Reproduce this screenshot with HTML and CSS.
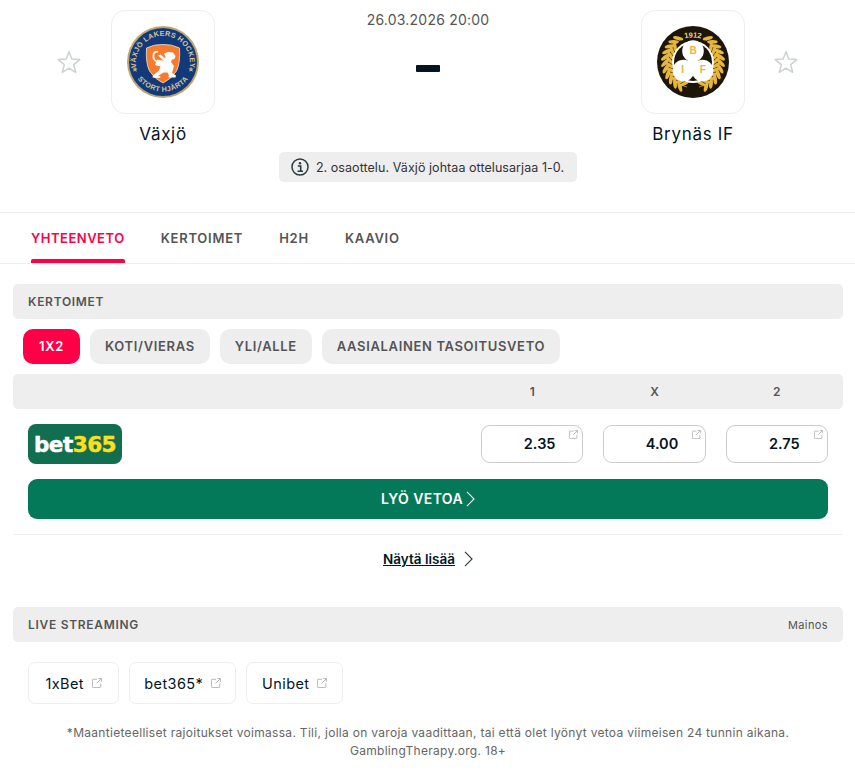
FILE: index.html
```html
<!DOCTYPE html>
<html lang="fi">
<head>
<meta charset="utf-8">
<title>Växjö - Brynäs IF</title>
<link rel="stylesheet" href="styles.css">
</head>
<body>
<svg class="defs" width="0" height="0" aria-hidden="true">
  <defs>
    <symbol id="ext" viewBox="0 0 12 12"><path d="M6 1.500H1.500a1 1 0 0 0-1 1v8a1 1 0 0 0 1 1h8a1 1 0 0 0 1-1V6.500M7.500.7h3.800v3.800M11.200.8 5.500 6.500" fill="none" stroke="currentColor" stroke-width="1"/></symbol>
    <symbol id="star" viewBox="0 0 24 24"><path d="M12 1.800l2.900 7.300 7.900.5-6.100 5 2 7.700L12 18.100l-6.700 4.200 2-7.700-6.100-5 7.900-.5z" fill="none" stroke="currentColor" stroke-width="1.500" stroke-linejoin="round"/></symbol>
    <symbol id="chev" viewBox="0 0 10 18"><path d="M1 1l8 8-8 8" fill="none" stroke="currentColor" stroke-width="1.200"/></symbol>
  </defs>
</svg>
<header class="match">
  <div class="match-row">
    <svg class="star"><use href="#star"/></svg>
    <div class="team">
      <div class="crest">
        <svg class="crest-img" viewBox="0 0 72 72">
          <defs>
            <path id="vtop" d="M9.500 42A27 27 0 1 1 62.500 42"/>
            <path id="vbot" d="M5.500 42A31.500 31.500 0 0 0 66.500 42"/>
          </defs>
          <circle cx="36" cy="36" r="36" fill="#bfa56e"/>
          <circle cx="36" cy="36" r="34" fill="#12397a"/>
          <text class="v-text"><textPath href="#vtop" startOffset="50%" text-anchor="middle">VÄXJÖ LAKERS HOCKEY</textPath></text>
          <text class="v-text"><textPath href="#vbot" startOffset="50%" text-anchor="middle">STORT HJÄRTA</textPath></text>
          <path d="M8 40.500l.8 1.900 2 .1-1.600 1.300.6 2-1.800-1.100-1.700 1.100.5-2-1.500-1.300 2-.1zM64 40.500l.8 1.900 2 .1-1.600 1.300.6 2-1.800-1.100-1.700 1.100.5-2-1.500-1.300 2-.1z" fill="#c9b27a"/>
          <path d="M19.500 22q8-4 16.500-3.500 8.500-.5 16.500 3.500 1 15-3 23-5 8-13.500 12-8.500-4-13.500-12-4-8-3-23z" fill="#f57c2f" stroke="#f2e3d0" stroke-width=".8"/>
          <path d="M34 38Q25 35 26.500 28.500 27.500 25 31 26" fill="none" stroke="#fff" stroke-width="1.600"/>
          <path d="M30 33.500 38 35 38.500 31 37 27.500 41 26 46 26.500 48.500 30 47.500 33 45 33.500 44 36 47 40 45 47 49 49.500 48.500 51.500 41.500 51.500 42 49.500 40.500 46.500 36.500 46.500 31 50 33.500 50.500 33 52 25.500 51.500 26 49.500 32 44.500 33.500 40.500 28 39z" fill="#fff"/>
          <path d="M38 36 31 29.500 33.500 28.500 39 33z" fill="#fff"/>
        </svg>
      </div>
      <div class="team-name">Växjö</div>
    </div>
    <div class="center">
      <div class="date">26.03.2026 20:00</div>
      <div class="score" aria-label="-"></div>
    </div>
    <div class="team">
      <div class="crest">
        <svg class="crest-img" viewBox="0 0 72 72">
          <defs>
            <ellipse id="lo" cx="36" cy="8" rx="1.900" ry="5.200" transform="rotate(45 36 8)"/>
            <ellipse id="li" cx="36" cy="12.500" rx="1.700" ry="4.600" transform="rotate(-42 36 12.500)"/>
            <g id="laurel">
              <path d="M49 14A25.500 25.500 0 0 1 42 61" fill="none" stroke="#e6b63d" stroke-width=".7"/>
              <use href="#lo" transform="rotate(32 36 36)"/><use href="#lo" transform="rotate(44 36 36)"/><use href="#lo" transform="rotate(56 36 36)"/><use href="#lo" transform="rotate(68 36 36)"/><use href="#lo" transform="rotate(80 36 36)"/><use href="#lo" transform="rotate(92 36 36)"/><use href="#lo" transform="rotate(104 36 36)"/><use href="#lo" transform="rotate(116 36 36)"/><use href="#lo" transform="rotate(128 36 36)"/><use href="#lo" transform="rotate(140 36 36)"/><use href="#lo" transform="rotate(152 36 36)"/>
              <use href="#li" transform="rotate(50 36 36)"/><use href="#li" transform="rotate(62 36 36)"/><use href="#li" transform="rotate(74 36 36)"/><use href="#li" transform="rotate(86 36 36)"/><use href="#li" transform="rotate(98 36 36)"/><use href="#li" transform="rotate(110 36 36)"/><use href="#li" transform="rotate(122 36 36)"/><use href="#li" transform="rotate(134 36 36)"/><use href="#li" transform="rotate(146 36 36)"/><use href="#li" transform="rotate(158 36 36)"/>
            </g>
            <path id="b19" d="M24 13.500Q36 9.500 48 13.500"/>
          </defs>
          <circle cx="36" cy="36" r="36" fill="#1d1608"/>
          <g fill="#e6b63d">
            <use href="#laurel"/>
            <use href="#laurel" transform="matrix(-1 0 0 1 72 0)"/>
          </g>
          <circle cx="36" cy="36" r="21" fill="#fff"/>
          <circle cx="36" cy="36" r="19" fill="#1d1608"/>
          <circle cx="36" cy="25" r="10.800" fill="#fff"/>
          <circle cx="26.500" cy="44.500" r="10.800" fill="#fff"/>
          <circle cx="45.500" cy="44.500" r="10.800" fill="#fff"/>
          <circle cx="36" cy="38" r="6" fill="#fff"/>
          <text class="b-year"><textPath href="#b19" startOffset="50%" text-anchor="middle">1912</textPath></text>
          <text class="b-letter" x="36" y="28">B</text>
          <text class="b-letter" x="25.700" y="46.500">I</text>
          <text class="b-letter" x="45.700" y="46.500">F</text>
        </svg>
      </div>
      <div class="team-name">Brynäs IF</div>
    </div>
    <svg class="star star-right"><use href="#star"/></svg>
  </div>
  <div class="notice">
    <svg class="info" viewBox="0 0 18 18"><circle cx="9" cy="9" r="8" fill="none" stroke="currentColor" stroke-width="1.500"/><circle cx="9" cy="5.200" r="1.200" fill="currentColor"/><path d="M6.800 8h2.900v5M6.500 13.300h5.500" fill="none" stroke="currentColor" stroke-width="1.600"/></svg>
    <span>2. osaottelu. Växjö johtaa ottelusarjaa 1-0.</span>
  </div>
</header>

<nav class="tabs">
  <a class="tab tab-active">YHTEENVETO</a>
  <a class="tab">KERTOIMET</a>
  <a class="tab">H2H</a>
  <a class="tab">KAAVIO</a>
</nav>

<main class="content">
  <section class="odds">
    <div class="bar"><span class="bar-title">KERTOIMET</span></div>
    <div class="pills">
      <a class="pill pill-active">1X2</a>
      <a class="pill">KOTI/VIERAS</a>
      <a class="pill">YLI/ALLE</a>
      <a class="pill">AASIALAINEN TASOITUSVETO</a>
    </div>
    <div class="bar odds-head">
      <div class="odds-cols">
        <span class="odds-label">1</span>
        <span class="odds-label">X</span>
        <span class="odds-label">2</span>
      </div>
    </div>
    <div class="odds-row">
      <div class="bet365"><span class="b-white">bet</span><span class="b-yellow">365</span></div>
      <div class="odds-cols">
        <a class="odd">2.35<svg class="odd-ext"><use href="#ext"/></svg></a>
        <a class="odd">4.00<svg class="odd-ext"><use href="#ext"/></svg></a>
        <a class="odd">2.75<svg class="odd-ext"><use href="#ext"/></svg></a>
      </div>
    </div>
    <a class="bet-btn">LYÖ VETOA<svg class="bet-chev"><use href="#chev"/></svg></a>
    <div class="more-row">
      <a class="more"><span class="more-text">Näytä lisää</span><svg class="more-chev"><use href="#chev"/></svg></a>
    </div>
  </section>

  <section class="live">
    <div class="bar bar-split"><span class="bar-title">LIVE STREAMING</span><span class="ad">Mainos</span></div>
    <div class="streams">
      <a class="stream">1xBet<svg class="stream-ext"><use href="#ext"/></svg></a>
      <a class="stream">bet365*<svg class="stream-ext"><use href="#ext"/></svg></a>
      <a class="stream">Unibet<svg class="stream-ext"><use href="#ext"/></svg></a>
    </div>
    <p class="terms">*Maantieteelliset rajoitukset voimassa. Tili, jolla on varoja vaadittaan, tai että olet lyönyt vetoa viimeisen 24 tunnin aikana. GamblingTherapy.org. 18+</p>
  </section>
</main>
</body>
</html>
```
FILE: styles.css
```css
* { box-sizing: border-box; }
html, body { margin: 0; padding: 0; background: #fff; }
body {
  height: 770px;
  overflow: hidden;
  font-family: "Inter", "Noto Sans", sans-serif;
  color: #04151f;
}
.defs { position: absolute; }
a { color: inherit; text-decoration: none; }

/* header */
.match { height: 213px; border-bottom: 1px solid #eee; padding-top: 10px; display: flex; flex-direction: column; align-items: center; }
.match-row { width: 100%; height: 142px; padding: 0 57px; display: flex; align-items: flex-start; }
.star { width: 24px; height: 24px; margin-top: 40px; color: #ccd2d2; flex: none; margin-right: 30px; }
.star-right { margin-right: 0; margin-left: 29px; }
.team { width: 104px; flex: none; display: flex; flex-direction: column; align-items: center; }
.crest { width: 104px; height: 104px; border: 1px solid #eee; border-radius: 14px; display: flex; align-items: center; justify-content: center; }
.crest-img { width: 72px; height: 72px; }
.team-name { font-size: 17px; letter-spacing: .7px; line-height: 24px; margin-top: 8px; white-space: nowrap; }
.center { flex: 1; display: flex; flex-direction: column; align-items: center; }
.date { font-size: 14px; line-height: 20px; color: #555; letter-spacing: .22px; }
.score { width: 24px; height: 7px; background: #04151f; margin-top: 35px; border-radius: 1px; }
.v-text { font: 700 7.200px "Liberation Sans", sans-serif; fill: #d6c396; letter-spacing: .3px; }
.b-year { font: 700 7.500px "Liberation Sans", sans-serif; fill: #e8d08a; }
.b-letter { font: 700 10px "Liberation Sans", sans-serif; fill: #e6b63d; text-anchor: middle; }

.notice { height: 30px; width: 298px; background: #eee; border-radius: 5px; display: flex; align-items: center; justify-content: center; gap: 7px; font-size: 12.500px; color: #333; letter-spacing: .06px; white-space: nowrap; }
.info { width: 18px; height: 18px; color: #2b3a42; flex: none; }

/* tabs */
.tabs { height: 51px; border-bottom: 1px solid #eee; padding-left: 31px; display: flex; gap: 36px; }
.tab { height: 50px; display: flex; align-items: center; font-size: 13px; font-weight: 600; color: #555; letter-spacing: .75px; }
.tab-active { color: #ff0046; letter-spacing: .5px; position: relative; }
.tab-active::after { content: ""; position: absolute; left: 0; right: 0; bottom: 0; height: 4px; background: #ff0046; border-radius: 2px 2px 0 0; }

/* content */
.content { padding: 20px 12px 0 13px; }
.bar { height: 35px; background: #eee; border-radius: 5px; display: flex; align-items: center; padding: 0 15px; }
.bar-title { font-size: 12px; font-weight: 600; color: #555; letter-spacing: .7px; }
.bar-split { justify-content: space-between; }
.ad { font-size: 11px; color: #555; letter-spacing: .4px; }

.pills { display: flex; gap: 10px; padding: 10px 10px; }
.pill { height: 35px; border-radius: 10px; background: #eee; color: #555; font-size: 13px; font-weight: 600; letter-spacing: .65px; display: flex; align-items: center; justify-content: center; padding: 0 15px 1px; }
.pill-active { background: #ff0046; color: #fff; min-width: 57px; }

.odds-head { justify-content: flex-end; }
.odds-cols { width: 347px; display: grid; grid-template-columns: repeat(3, 1fr); column-gap: 20px; }
.odds-label { text-align: center; font-size: 12px; font-weight: 600; color: #555; }

.odds-row { display: flex; justify-content: space-between; align-items: center; padding: 15px; }
.bet365 { width: 94px; height: 40px; background: #126e51; border-radius: 8px; display: flex; align-items: center; justify-content: center; font-family: "DejaVu Sans", sans-serif; font-weight: 700; font-size: 21.500px; letter-spacing: -.5px; -webkit-text-stroke: .5px currentColor; }
.b-white { color: #fff; }
.b-yellow { color: #ffdf1b; }
.odd { position: relative; height: 38px; border: 1px solid #ccc; border-radius: 9px; display: flex; align-items: center; justify-content: center; padding: 0 0 1px 15px; font-size: 14.500px; font-weight: 600; }
.odd-ext { position: absolute; top: 4px; right: 4px; width: 9px; height: 9px; color: #aaa; }

.bet-btn { height: 40px; margin: 0 15px; background: #03795a; color: #fff; border-radius: 9px; display: flex; align-items: center; justify-content: center; gap: 3px; font-size: 14px; font-weight: 600; letter-spacing: .4px; padding-bottom: 1px; }
.bet-chev { width: 9px; height: 16px; color: #fff; }

.more-row { margin-top: 15px; border-top: 1px solid #eee; height: 73px; display: flex; justify-content: center; padding-top: 14px; }
.more { display: flex; align-items: flex-start; gap: 9px; font-size: 13.500px; font-weight: 600; height: 20px; }
.more-text { text-decoration: underline; line-height: 20px; }
.more-chev { width: 9px; height: 16px; margin-top: 2px; color: #26343b; }

.streams { display: grid; grid-template-columns: 91px 107px 97px; gap: 10px; padding: 20px 15px 0; }
.stream { height: 42px; border: 1px solid #eee; border-radius: 7px; display: flex; align-items: center; justify-content: center; gap: 7.500px; font-size: 14.500px; letter-spacing: .4px; }
.stream-ext { width: 10px; height: 10px; color: #aaa; }
.terms { margin: 20px 20px 0; text-align: center; font-size: 12px; line-height: 18px; color: #666; letter-spacing: .3px; }
```
